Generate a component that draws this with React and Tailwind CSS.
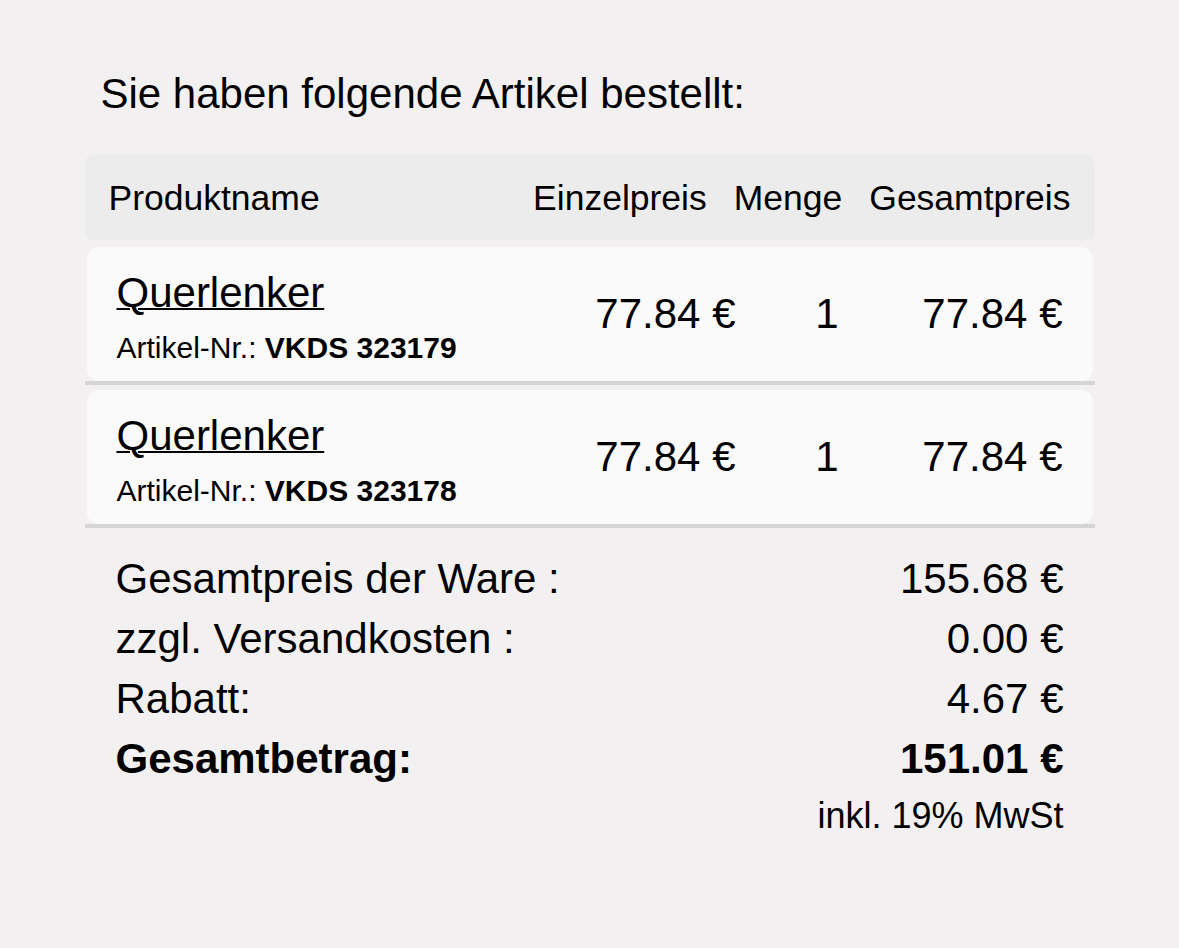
const items = [
  { name: 'Querlenker', sku: 'VKDS 323179', price: '77.84 €', qty: 1, total: '77.84 €' },
  { name: 'Querlenker', sku: 'VKDS 323178', price: '77.84 €', qty: 1, total: '77.84 €' },
];

const summary = [
  { label: 'Gesamtpreis der Ware :', value: '155.68 €' },
  { label: 'zzgl. Versandkosten :', value: '0.00 €' },
  { label: 'Rabatt:', value: '4.67 €' },
];

function ItemRow({ item, first }) {
  return (
    <div className={`border-b-4 border-[#d6d5d5] px-[2px] ${first ? 'pt-[7px]' : 'pt-[5px]'}`}>
      <div className="h-[134px] rounded-xl bg-[#fafafa] px-[30px] flex items-center">
        <div className="flex-1 pt-[6px]">
          <a href="#" className="block text-[42px] leading-[48px] underline decoration-2">
            {item.name}
          </a>
          <div className="mt-[13px] text-[30px] leading-[36px]">
            Artikel-Nr.: <span className="font-bold">{item.sku}</span>
          </div>
        </div>
        <div className="w-[200px] text-right text-[42px] leading-[48px]">{item.price}</div>
        <div className="w-[103px] text-right text-[42px] leading-[48px]">{item.qty}</div>
        <div className="w-[224px] text-right text-[42px] leading-[48px]">{item.total}</div>
      </div>
    </div>
  );
}

export default function App() {
  return (
    <div className="min-h-screen bg-[#f2f0f1] text-black font-['Liberation_Sans',Arial,sans-serif]">
      <div className="w-[1010px] mx-auto pt-[70px]">

        {/* Heading */}
        <h2 className="px-4 text-[42px] leading-[48px]">Sie haben folgende Artikel bestellt:</h2>

        {/* Table header */}
        <div className="mt-[37px] h-[85px] rounded-lg bg-[#ececec] px-[24px] flex items-center text-[35.5px] leading-[40px]">
          <div className="flex-1">Produktname</div>
          <div>Einzelpreis</div>
          <div className="ml-[27px]">Menge</div>
          <div className="ml-[27px]">Gesamtpreis</div>
        </div>

        {/* Items */}
        {items.map((item, i) => (
          <ItemRow key={item.sku} item={item} first={i === 0} />
        ))}

        {/* Totals */}
        <div className="pt-[21px] px-[31px]">
          {summary.map(row => (
            <div key={row.label} className="flex justify-between text-[42px] leading-[60px]">
              <span>{row.label}</span>
              <span>{row.value}</span>
            </div>
          ))}
          <div className="flex justify-between text-[42px] leading-[60px] font-bold">
            <span>Gesamtbetrag:</span>
            <span>151.01 €</span>
          </div>
          <div className="mt-[3px] text-right text-[36px] leading-[48px]">inkl. 19% MwSt</div>
        </div>

      </div>
    </div>
  );
}
